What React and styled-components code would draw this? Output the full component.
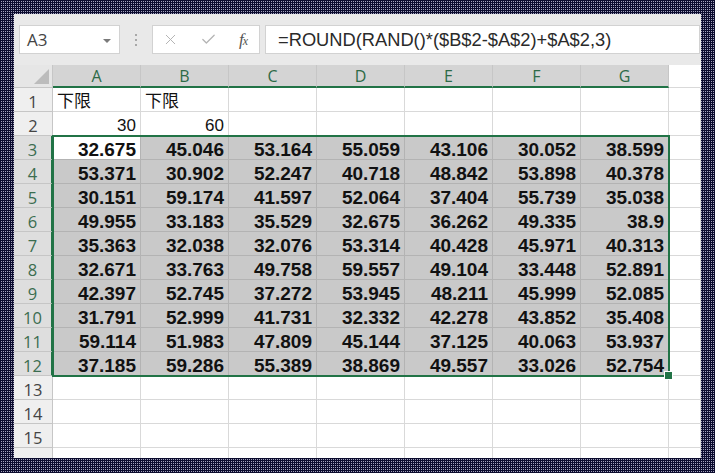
import React from 'react';
import styled, { createGlobalStyle } from 'styled-components';
import { X, Check } from 'lucide-react';

const GlobalStyle = createGlobalStyle`
  html, body {
    margin: 0;
    padding: 0;
    width: 715px;
    height: 473px;
    overflow: hidden;
  }
`;

const Colors = {
  Green: '#217346',
  Grid: '#d9d9d9',
  SelGrid: '#b3b3b3',
  SelFill: '#c9c9c9',
  HeaderBg: '#efefef',
  HeaderSel: '#d4d4d4',
  RowSel: '#dedede',
  HeaderLine: '#c6c6c6',
};

const Frame = styled.div`
  width: 715px;
  height: 473px;
  box-sizing: border-box;
  padding: 14px 14px 15px 14px;
  background-color: #a4a4c0;
  background-image: linear-gradient(to right, #0c0c2e 50%, transparent 50%),
    linear-gradient(to bottom, #0c0c2e 50%, transparent 50%);
  background-size: 2px 2px;
`;

const Window = styled.div`
  width: 100%;
  height: 100%;
  background: #fff;
  display: flex;
  flex-direction: column;
  overflow: hidden;
`;

const Toolbar = styled.div`
  height: 51px;
  flex: none;
  box-sizing: border-box;
  padding: 11px 1px 11px 5px;
  background: #e9e9e9;
  display: flex;
  align-items: stretch;
`;

const Box = styled.div`
  background: #fff;
  border: 1px solid #d2d2d2;
  box-sizing: border-box;
  display: flex;
  align-items: center;
`;

const NameBox = styled(Box)`
  width: 101px;
  padding: 0 8px 0 7px;
  justify-content: space-between;
  font-family: 'Open Sans', 'Liberation Sans', sans-serif;
  font-size: 17px;
  color: #444;
`;

const Caret = styled.span`
  width: 0;
  height: 0;
  border-left: 4px solid transparent;
  border-right: 4px solid transparent;
  border-top: 4px solid #7a7a7a;
  margin-top: 2px;
`;

const Grip = styled.div`
  width: 32px;
  display: flex;
  flex-direction: column;
  align-items: center;
  justify-content: center;
  gap: 3px;

  > span {
    width: 2px;
    height: 2px;
    background: #a8a8a8;
  }
`;

const ActionBox = styled(Box)`
  width: 108px;
  padding: 0 12px 0 9px;
  justify-content: space-between;
  color: #b4b4b4;
  margin-right: 5px;
`;

const Fx = styled.span`
  font-family: 'Liberation Serif', 'DejaVu Serif', serif;
  font-style: italic;
  font-size: 17px;
  color: #555;
  letter-spacing: -1px;

  > small {
    font-size: 12px;
  }
`;

const FormulaBox = styled(Box)`
  flex: 1;
  padding-left: 12px;
  font-family: 'Liberation Sans', Arial, sans-serif;
  font-size: 18.3px;
  color: #2a2a2a;
  white-space: nowrap;
`;

const SheetWrap = styled.div`
  position: relative;
  flex: 1;
  overflow: hidden;
`;

const Sheet = styled.div`
  display: grid;
  grid-template-columns: 39px repeat(7, 88px) 1fr;
  grid-template-rows: 23px;
  grid-auto-rows: 24px;
`;

const Corner = styled.div`
  background: #e6e6e6;
  border-right: 1px solid ${Colors.HeaderLine};
  border-bottom: 1px solid ${Colors.HeaderLine};
  box-sizing: border-box;
  display: flex;
  align-items: flex-end;
  justify-content: flex-end;
  padding: 0 3px 3px 0;

  > span {
    width: 0;
    height: 0;
    border-left: 15px solid transparent;
    border-bottom: 15px solid #bcbcbc;
  }
`;

const ColHead = styled.div`
  box-sizing: border-box;
  background: ${(p) => (p.$blank ? '#fff' : p.$sel ? Colors.HeaderSel : Colors.HeaderBg)};
  border-right: 1px solid ${(p) => (p.$blank ? '#fff' : Colors.HeaderLine)};
  border-bottom: ${(p) => (p.$sel ? `2px solid ${Colors.Green}` : `1px solid ${Colors.Grid}`)};
  display: flex;
  align-items: center;
  justify-content: center;
  font-family: 'Open Sans', 'Liberation Sans', sans-serif;
  font-size: 16px;
  color: ${(p) => (p.$sel ? '#2d6a47' : '#444')};
`;

const RowHead = styled.div`
  box-sizing: border-box;
  background: ${(p) => (p.$sel ? Colors.RowSel : Colors.HeaderBg)};
  border-right: ${(p) => (p.$sel ? `2px solid ${Colors.Green}` : `1px solid ${Colors.HeaderLine}`)};
  border-bottom: 1px solid ${Colors.HeaderLine};
  display: flex;
  align-items: center;
  justify-content: center;
  padding-top: 3px;
  font-family: 'Open Sans', 'Liberation Sans', sans-serif;
  font-size: 16.5px;
  color: ${(p) => (p.$sel ? '#3b6d50' : '#444')};
`;

const Cell = styled.div`
  box-sizing: border-box;
  background: ${(p) => (p.$sel && !p.$active ? Colors.SelFill : '#fff')};
  border-right: 1px solid ${(p) => (p.$sel ? Colors.SelGrid : Colors.Grid)};
  border-bottom: 1px solid ${(p) => (p.$sel ? Colors.SelGrid : Colors.Grid)};
  display: flex;
  align-items: flex-end;
  justify-content: ${(p) => (p.$num ? 'flex-end' : 'flex-start')};
  padding: 0 4px 0 4px;
  font-family: 'Liberation Sans', 'Noto Sans CJK SC', sans-serif;
  font-size: ${(p) => (p.$bold ? '19px' : '17px')};
  line-height: 18px;
  font-weight: ${(p) => (p.$bold ? 700 : 400)};
  color: #111;
  white-space: nowrap;
  overflow: hidden;
`;

const Selection = styled.div`
  position: absolute;
  left: 38px;
  top: 70px;
  width: 618px;
  height: 242px;
  box-sizing: border-box;
  border: 2px solid ${Colors.Green};
  pointer-events: none;
`;

const Handle = styled.span`
  position: absolute;
  right: -5px;
  bottom: -5px;
  width: 7px;
  height: 7px;
  background: ${Colors.Green};
  border: 1px solid #fff;
`;

const cols = ['A', 'B', 'C', 'D', 'E', 'F', 'G'];

const data = [
  ['32.675', '45.046', '53.164', '55.059', '43.106', '30.052', '38.599'],
  ['53.371', '30.902', '52.247', '40.718', '48.842', '53.898', '40.378'],
  ['30.151', '59.174', '41.597', '52.064', '37.404', '55.739', '35.038'],
  ['49.955', '33.183', '35.529', '32.675', '36.262', '49.335', '38.9'],
  ['35.363', '32.038', '32.076', '53.314', '40.428', '45.971', '40.313'],
  ['32.671', '33.763', '49.758', '59.557', '49.104', '33.448', '52.891'],
  ['42.397', '52.745', '37.272', '53.945', '48.211', '45.999', '52.085'],
  ['31.791', '52.999', '41.731', '32.332', '42.278', '43.852', '35.408'],
  ['59.114', '51.983', '47.809', '45.144', '37.125', '40.063', '53.937'],
  ['37.185', '59.286', '55.389', '38.869', '49.557', '33.026', '52.754'],
];

function cellFor(row, col) {
  if (row === 1 && col < 2) return { text: '下限' };
  if (row === 2 && col === 0) return { text: '30', num: true };
  if (row === 2 && col === 1) return { text: '60', num: true };
  if (row >= 3 && row <= 12 && col < 7) return { text: data[row - 3][col], num: true, bold: true };
  return { text: '' };
}

export default function App() {
  const rows = Array.from({ length: 15 }, (_, i) => i + 1);
  return (
    <Frame>
      <GlobalStyle />
      <Window>
        <Toolbar>
          <NameBox>
            A3
            <Caret />
          </NameBox>
          <Grip>
            <span />
            <span />
            <span />
          </Grip>
          <ActionBox>
            <X size={17} strokeWidth={1.4} />
            <Check size={17} strokeWidth={1.8} />
            <Fx>
              f<small>x</small>
            </Fx>
          </ActionBox>
          <FormulaBox>=ROUND(RAND()*($B$2-$A$2)+$A$2,3)</FormulaBox>
        </Toolbar>
        <SheetWrap>
          <Sheet>
            <Corner>
              <span />
            </Corner>
            {cols.map((c) => (
              <ColHead key={c} $sel>
                {c}
              </ColHead>
            ))}
            <ColHead $blank />
            {rows.map((r) => {
              const sel = r >= 3 && r <= 12;
              return (
                <React.Fragment key={r}>
                  <RowHead $sel={sel}>{r}</RowHead>
                  {[0, 1, 2, 3, 4, 5, 6, 7].map((c) => {
                    const cell = cellFor(r, c);
                    const inSel = sel && c < 7;
                    return (
                      <Cell
                        key={c}
                        $sel={inSel}
                        $active={r === 3 && c === 0}
                        $num={cell.num}
                        $bold={cell.bold}
                      >
                        {cell.text}
                      </Cell>
                    );
                  })}
                </React.Fragment>
              );
            })}
            <RowHead />
            {[0, 1, 2, 3, 4, 5, 6, 7].map((c) => (
              <Cell key={c} />
            ))}
          </Sheet>
          <Selection>
            <Handle />
          </Selection>
        </SheetWrap>
      </Window>
    </Frame>
  );
}
